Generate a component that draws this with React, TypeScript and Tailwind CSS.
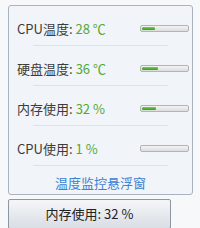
const font = { fontFamily: '"Noto Sans CJK SC", "Noto Sans", sans-serif' };

type Row = { label: string; value: string; pct: number };

const rows: Row[] = [
  { label: "CPU温度:", value: "28 ℃", pct: 28 },
  { label: "硬盘温度:", value: "36 ℃", pct: 36 },
  { label: "内存使用:", value: "32 %", pct: 32 },
  { label: "CPU使用:", value: "1 %", pct: 1 },
];

function Bar({ pct }: { pct: number }) {
  return (
    <div className="h-[7px] w-[49px] rounded-[2px] border border-[#b4b4b4] bg-gradient-to-b from-[#f4f4f4] to-[#dcdcdc] p-px">
      {pct > 2 && (
        <div
          className="h-full rounded-[1px] bg-gradient-to-b from-[#6fd44a] to-[#2f9e17]"
          style={{ width: `${pct}%` }}
        />
      )}
    </div>
  );
}

export default function App() {
  return (
    <div className="h-[228px] w-[200px] overflow-hidden bg-[#f7f8fa] pt-[5px] text-[13px]" style={font}>
      <div className="ml-[8px] mr-[7px] rounded-[3px] border border-[#a9b3c0] bg-[#f1f4f8]">
        {rows.map((r) => (
          <div key={r.label} className="pt-[6px]">
            <div className="flex h-[33px] items-center justify-between pl-[8px] pr-[3px]">
              <span className="text-[#3c3c3c]">
                {r.label}
                <span className="ml-[3px] text-[#56a834]">{r.value}</span>
              </span>
              <Bar pct={r.pct} />
            </div>
            <div className="mx-[24px] h-px bg-[#dde2e8]" />
          </div>
        ))}
        <div className="flex h-[28px] items-center justify-center pt-[5px] text-[#3c82d2]">温度监控悬浮窗</div>
      </div>
      <div className="ml-[8px] mt-[4px] flex h-[30px] w-[163px] items-center justify-center rounded-[2px] border border-[#8d96a3] bg-gradient-to-b from-[#f5f6f8] to-[#d9dee5] text-[#222]">
        内存使用: 32 %
      </div>
    </div>
  );
}
